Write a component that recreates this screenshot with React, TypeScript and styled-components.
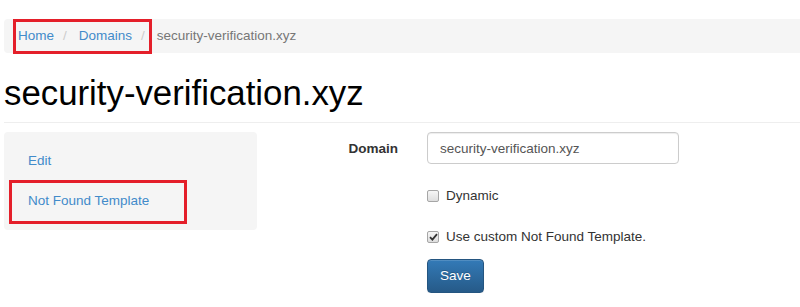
import React from "react";
import styled, { createGlobalStyle } from "styled-components";

const GlobalStyle = createGlobalStyle`
  html, body {
    margin: 0;
    padding: 0;
    background: #fff;
    overflow: hidden;
  }
  body {
    font-family: "Liberation Sans", Arial, Helvetica, sans-serif;
    font-size: 13.5px;
    line-height: 20px;
    color: #333;
  }
`;

const Page = styled.div`
  width: 820px;
  padding: 19px 0 0 4px;
  box-sizing: border-box;
`;

const Breadcrumb = styled.div`
  position: relative;
  display: flex;
  align-items: center;
  height: 34px;
  padding: 0 14px;
  background-color: #f5f5f5;
  border-radius: 4px;
`;

const Crumb = styled.a`
  color: #428bca;
  text-decoration: none;
`;

const CrumbActive = styled.span`
  color: #777;
`;

const Sep = styled.span`
  color: #ccc;
  padding: 0 12px 0 9px;
`;

const Highlight = styled.span<{ $left: number; $top: number; $w: number; $h: number }>`
  position: absolute;
  left: ${(p) => p.$left}px;
  top: ${(p) => p.$top}px;
  width: ${(p) => p.$w}px;
  height: ${(p) => p.$h}px;
  border: 3px solid #e41f2a;
  box-sizing: border-box;
  pointer-events: none;
`;

const PageHeader = styled.h1`
  margin: 20px 0 9px;
  padding-bottom: 9px;
  border-bottom: 1px solid #eee;
  font-size: 34.8px;
  line-height: 40px;
  font-weight: 400;
  color: #000;
`;

const Row = styled.div`
  display: flex;
  align-items: flex-start;
`;

const Sidebar = styled.div`
  width: 253px;
  padding: 9px;
  box-sizing: border-box;
  background-color: #f5f5f5;
  border-radius: 4px;
`;

const NavItem = styled.a`
  position: relative;
  display: block;
  padding: 10px 15px;
  color: #428bca;
  text-decoration: none;
`;

const Form = styled.div`
  display: flex;
  flex-direction: column;
`;

const FormGroup = styled.div<{ $mb: number }>`
  display: flex;
  align-items: flex-start;
  margin-bottom: ${(p) => p.$mb}px;
`;

const Label = styled.label`
  width: 141px;
  margin-right: 29px;
  padding-top: 7px;
  text-align: right;
  font-weight: 700;
  color: #333;
`;

const Input = styled.input`
  width: 252px;
  height: 32px;
  box-sizing: border-box;
  padding: 6px 12px;
  border: 1px solid #ccc;
  border-radius: 4px;
  box-shadow: inset 0 1px 1px rgba(0, 0, 0, 0.075);
  font-family: inherit;
  font-size: 13.5px;
  color: #555;
  outline: none;
`;

const Controls = styled.div<{ $mt: number }>`
  margin-left: 170px;
  margin-top: ${(p) => p.$mt}px;
`;

const CheckRow = styled.label`
  display: flex;
  align-items: flex-start;
  gap: 7px;
  padding-top: 7px;
  min-height: 27px;
  box-sizing: border-box;
  color: #333;
`;

const Box = styled.span`
  display: flex;
  align-items: center;
  justify-content: center;
  width: 12px;
  height: 12px;
  margin-top: 4px;
  box-sizing: border-box;
  border: 1px solid #a6a6a6;
  border-radius: 2px;
  background: linear-gradient(to bottom, #f6f6f6, #dedede);
`;

const SaveButton = styled.button`
  padding: 6px 12px;
  font-family: inherit;
  font-size: 13.5px;
  line-height: 20px;
  color: #fff;
  text-shadow: 0 -1px 0 rgba(0, 0, 0, 0.2);
  background-image: linear-gradient(to bottom, #337ab7 0, #265a88 100%);
  border: 1px solid #245580;
  border-radius: 4px;
  box-shadow: inset 0 1px 0 rgba(255, 255, 255, 0.15), 0 1px 1px rgba(0, 0, 0, 0.075);
  cursor: pointer;
`;

function Checkbox({ checked, label }: { checked?: boolean; label: string }) {
  return (
    <CheckRow>
      <Box>
        {checked && (
          <svg width="9" height="8" viewBox="0 0 9 8">
            <path d="M1 4.2 L3.4 6.6 L8 1.2" fill="none" stroke="#333" strokeWidth="1.8" />
          </svg>
        )}
      </Box>
      <span>{label}</span>
    </CheckRow>
  );
}

export default function App() {
  return (
    <>
      <GlobalStyle />
      <Page>
        <Breadcrumb>
          <Crumb href="#">Home</Crumb>
          <Sep>/</Sep>
          <Crumb href="#">Domains</Crumb>
          <Sep>/</Sep>
          <CrumbActive>security-verification.xyz</CrumbActive>
          <Highlight $left={9} $top={0} $w={139} $h={35} />
        </Breadcrumb>
        <PageHeader>security-verification.xyz</PageHeader>
        <Row>
          <Sidebar>
            <NavItem href="#">Edit</NavItem>
            <NavItem href="#">
              Not Found Template
              <Highlight $left={-4} $top={-1} $w={178} $h={44} />
            </NavItem>
          </Sidebar>
          <Form>
            <FormGroup $mb={15}>
              <Label>Domain</Label>
              <Input defaultValue="security-verification.xyz" />
            </FormGroup>
            <Controls $mt={0}>
              <Checkbox label="Dynamic" />
            </Controls>
            <Controls $mt={14}>
              <Checkbox checked label="Use custom Not Found Template." />
            </Controls>
            <Controls $mt={12}>
              <SaveButton>Save</SaveButton>
            </Controls>
          </Form>
        </Row>
      </Page>
    </>
  );
}
